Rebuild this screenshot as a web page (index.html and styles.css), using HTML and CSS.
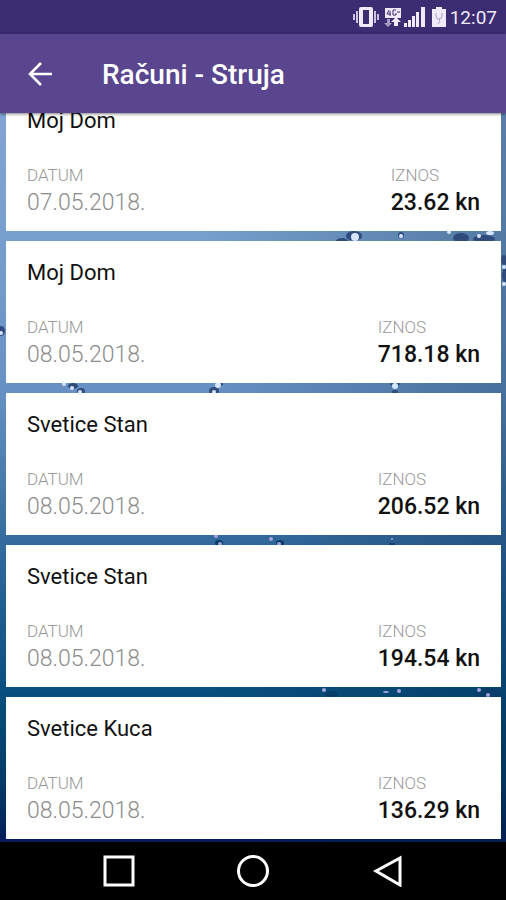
FILE: index.html
```html
<!DOCTYPE html>
<html lang="hr">
<head>
<meta charset="utf-8">
<meta name="viewport" content="width=device-width, initial-scale=1">
<title>Računi - Struja</title>
<link rel="stylesheet" href="styles.css">
</head>
<body>
<div class="status">
  <svg class="status-icons" width="97" height="24" viewBox="0 0 97 24" aria-hidden="true">
    <g fill="#efeafa">
      <path fill-rule="evenodd" d="M8 2h10q2 0 2 2v16q0 2-2 2H8q-2 0-2-2V4q0-2 2-2zM10 5v14h6V5z"/>
      <path opacity=".8" d="M3 6h2v12H3zM0 9h2v6H0zM21 6h2v12h-2zM24 9h2v6h-2z"/>
      <path d="M32 3h16v10H32z"/>
      <path d="M43 12l5 5h-3v4h-4v-4h-3z"/>
      <path opacity=".6" d="M34 14h3v4h2l-4 4-4-4h3z"/>
      <path d="M51 18h3v4h-3zM55 15h3v7h-3zM59 11h3v11h-3zM63 7h3v15h-3zM68 2h4v20h-4z"/>
      <path d="M83 2h6v2h4v18H79V4h4z"/>
    </g>
    <path d="M36 5l-2 4h4M37 6v5M43 5h-3v5h3V8M44 7h3" fill="none" stroke="#3c2c72"/>
    <path d="M83 8v3q0 3 3 3t3-3V8M86 14q2 3-1 5" fill="none" stroke="#aaa2c4"/>
  </svg>
  <time class="clock">12:07</time>
</div>
<header class="toolbar">
  <button class="back" aria-label="Natrag">
    <svg width="24" height="24" viewBox="0 0 24 24" aria-hidden="true"><path d="M24 12H2M13 1L2 12 13 23" fill="none" stroke="#fff" stroke-width="2.600"/></svg>
  </button>
  <h1>Računi - Struja</h1>
</header>
<main class="content">
  <svg class="drops" viewBox="0 113 506 729" preserveAspectRatio="none" aria-hidden="true">
    <g fill="#2f4c7c">
      <ellipse cx="354" cy="236" rx="8" ry="5"/><ellipse cx="342" cy="241" rx="6" ry="3"/>
      <ellipse cx="401" cy="235" rx="3" ry="3"/><ellipse cx="461" cy="238" rx="8" ry="5"/><ellipse cx="484" cy="239" rx="11" ry="4"/>
      <ellipse cx="504" cy="260" rx="3" ry="5"/><ellipse cx="505" cy="275" rx="3" ry="7"/>
      <ellipse cx="1" cy="331" rx="4" ry="5"/>
      <ellipse cx="73" cy="386" rx="5" ry="3"/><ellipse cx="81" cy="391" rx="4" ry="3"/>
      <ellipse cx="214" cy="391" rx="5" ry="4"/><ellipse cx="219" cy="384" rx="4" ry="2"/>
      <ellipse cx="395" cy="384" rx="5" ry="2"/><ellipse cx="395" cy="392" rx="3" ry="2"/>
    </g>
    <g fill="#073d68">
      <ellipse cx="219" cy="543" rx="4" ry="3"/><ellipse cx="280" cy="543" rx="4" ry="3"/><ellipse cx="392" cy="544" rx="3" ry="1"/>
      <ellipse cx="331" cy="694" rx="7" ry="3"/><ellipse cx="488" cy="693" rx="13" ry="5"/>
    </g>
    <g fill="#d5e5ff">
      <circle cx="355" cy="237" r="4"/><circle cx="401" cy="236" r="2"/><circle cx="449" cy="232" r="2"/><circle cx="479" cy="236" r="2"/><ellipse cx="490" cy="233" rx="4" ry="2"/>
      <circle cx="504" cy="267" r="2"/><circle cx="504" cy="284" r="2"/><circle cx="1" cy="333" r="2"/>
      <circle cx="72" cy="388" r="2"/><circle cx="80" cy="392" r="2"/><circle cx="64" cy="384" r="2"/>
      <circle cx="218" cy="385" r="3"/><circle cx="214" cy="392" r="2"/><circle cx="395" cy="386" r="3"/>
    </g>
    <g fill="#a5a3dc">
      <circle cx="216" cy="536" r="2"/><circle cx="220" cy="544" r="2"/><circle cx="271" cy="539" r="2"/><circle cx="279" cy="544" r="2"/><circle cx="392" cy="539" r="1"/>
      <circle cx="324" cy="690" r="2"/><ellipse cx="386" cy="692" rx="3" ry="1"/><circle cx="399" cy="691" r="2"/><circle cx="479" cy="690" r="2"/><circle cx="488" cy="695" r="2"/>
    </g>
  </svg>
  <ul class="bills">
    <li class="card"><h2>Moj Dom</h2><dl><div><dt>DATUM</dt><dd>07.05.2018.</dd></div><div class="amount"><dt>IZNOS</dt><dd>23.62 kn</dd></div></dl></li>
    <li class="card"><h2>Moj Dom</h2><dl><div><dt>DATUM</dt><dd>08.05.2018.</dd></div><div class="amount"><dt>IZNOS</dt><dd>718.18 kn</dd></div></dl></li>
    <li class="card"><h2>Svetice Stan</h2><dl><div><dt>DATUM</dt><dd>08.05.2018.</dd></div><div class="amount"><dt>IZNOS</dt><dd>206.52 kn</dd></div></dl></li>
    <li class="card"><h2>Svetice Stan</h2><dl><div><dt>DATUM</dt><dd>08.05.2018.</dd></div><div class="amount"><dt>IZNOS</dt><dd>194.54 kn</dd></div></dl></li>
    <li class="card"><h2>Svetice Kuca</h2><dl><div><dt>DATUM</dt><dd>08.05.2018.</dd></div><div class="amount"><dt>IZNOS</dt><dd>136.29 kn</dd></div></dl></li>
  </ul>
</main>
<nav class="navbar" aria-label="Sustav">
  <button aria-label="Nedavno"><svg width="32" height="32" viewBox="0 0 32 32"><path d="M2 2h28v28H2z"/></svg></button>
  <button aria-label="Početna"><svg width="32" height="32" viewBox="0 0 32 32"><circle cx="16" cy="16" r="14.500"/></svg></button>
  <button aria-label="Natrag"><svg width="32" height="32" viewBox="0 0 32 32"><path d="M29 3v27L5 16z"/></svg></button>
</nav>
</body>
</html>
```
FILE: styles.css
```css
* { box-sizing: border-box; }

body {
  margin: 0;
  height: 100vh;
  display: flex;
  flex-direction: column;
  overflow: hidden;
  background: #000;
  font-family: Roboto, "Noto Sans", sans-serif;
}

h1, h2, dl, dd, ul { margin: 0; padding: 0; }

button {
  border: 0;
  padding: 0;
  background: none;
  display: flex;
}

.status {
  flex: none;
  display: flex;
  align-items: center;
  justify-content: flex-end;
  padding: 5px 9px;
  background: #3c2c72;
}

.clock {
  color: #efeafa;
  font-size: 19px;
  line-height: 26px;
}

.status-icons,
.clock { height: 24px; }

.toolbar {
  flex: none;
  display: flex;
  align-items: center;
  gap: 50px;
  height: 79px;
  padding: 0 28px;
  background: #59468f;
  color: #fff;
  position: relative;
  z-index: 1;
  box-shadow: 0 1px 3px rgba(0, 0, 0, 0.5);
}

h1 {
  padding-top: 2px;
  font-size: 28px;
  line-height: 36px;
  font-weight: 500;
}

.content {
  flex: 1;
  min-height: 0;
  overflow: hidden;
  position: relative;
  background:
    linear-gradient(90deg, transparent 40%, rgba(0, 35, 65, 0.3)),
    linear-gradient(#83a4d4, #779fcd 17%, #6791c5 38%, #336b9f 59%, #08507f 79%, #063a68 92%, #061c59);
}

.drops {
  position: absolute;
  inset: 0;
  width: 100%;
  height: 100%;
}

/* The list is scrolled partway under the toolbar. */
.bills {
  position: relative;
  list-style: none;
  display: grid;
  gap: 10px;
  margin-top: -24px;
  padding: 0 5px 0 6px;
}

.card {
  padding: 17px 21px 12px;
  background: #fff;
  color: #111;
}

h2 {
  font-size: 22px;
  line-height: 30px;
  font-weight: 400;
}

dl {
  display: flex;
  justify-content: space-between;
  margin-top: 27px;
}

dt {
  color: #999;
  font-size: 17px;
  line-height: 24px;
  font-weight: 300;
}

dd {
  color: #8c8c8c;
  font-size: 23px;
  line-height: 32px;
  font-weight: 300;
}

.amount dd {
  color: #111;
  font-weight: 500;
}

.navbar {
  flex: none;
  display: flex;
  align-items: center;
  justify-content: center;
  gap: 102px;
  height: 58px;
  background: #000;
}

.navbar path,
.navbar circle {
  fill: none;
  stroke: #fff;
  stroke-width: 3px;
}
```
